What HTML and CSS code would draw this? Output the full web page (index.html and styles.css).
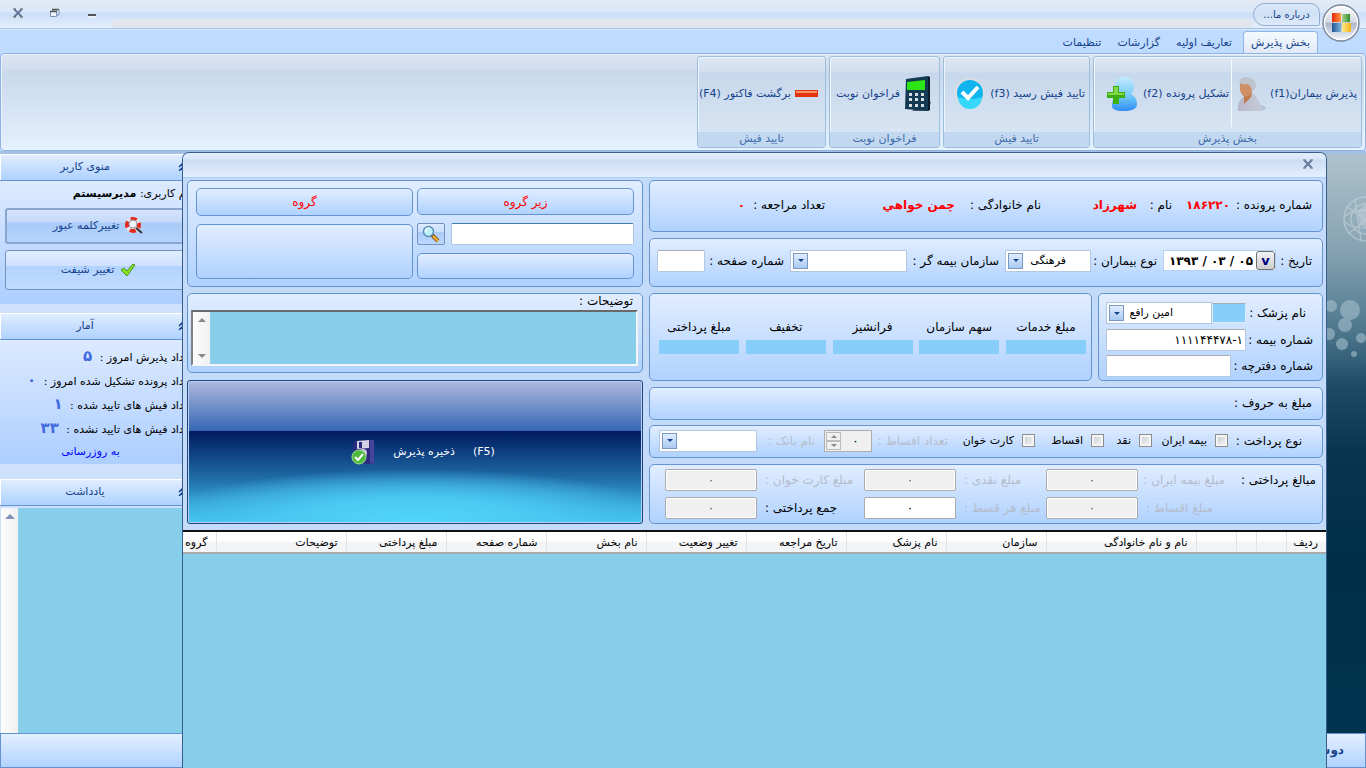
FILE: index.html
```html
<!DOCTYPE html>
<html lang="fa" dir="rtl">
<head>
  <meta charset="UTF-8">
  <meta name="viewport" content="width=device-width, initial-scale=1.0">
  <title>بخش پذیرش</title>
  <link rel="stylesheet" href="styles.css">
</head>
<body>

  <header class="titlebar">
    <button class="orb" aria-label="منو">
      <svg width="38" height="38" viewBox="0 0 38 38">
        <defs>
          <linearGradient id="orbFill" x1="0" y1="0" x2="0" y2="1">
            <stop offset="0" stop-color="#fdfdfe"/>
            <stop offset=".48" stop-color="#d3d8e2"/>
            <stop offset=".5" stop-color="#a9b5ca"/>
            <stop offset="1" stop-color="#f6fbff"/>
          </linearGradient>
          <linearGradient id="red"><stop offset="0" stop-color="#e8280c"/><stop offset="1" stop-color="#fb9a3c"/></linearGradient>
          <linearGradient id="green"><stop offset="0" stop-color="#a9d18a"/><stop offset="1" stop-color="#2f8d2c"/></linearGradient>
          <linearGradient id="blue"><stop offset="0" stop-color="#1d5696"/><stop offset="1" stop-color="#7fb2dc"/></linearGradient>
          <linearGradient id="gold"><stop offset="0" stop-color="#fde98d"/><stop offset="1" stop-color="#f5b417"/></linearGradient>
        </defs>
        <circle cx="19" cy="19" r="18" fill="url(#orbFill)" stroke="#7d8798" stroke-width="1.4"/>
        <circle cx="19" cy="19" r="16.5" fill="none" stroke="#fff" stroke-width="1.2"/>
        <path d="M10 9h9v9h-9z" fill="url(#red)"/>
        <path d="M20 10h8v8h-8z" fill="url(#green)"/>
        <path d="M10 19h9v9h-9z" fill="url(#blue)"/>
        <path d="M20 19h9v9h-9z" fill="url(#gold)"/>
      </svg>
    </button>
    <button class="about">درباره ما...</button>
    <span class="quick-strip"></span>
    <div class="window-buttons">
      <button aria-label="کوچک کردن"><svg width="10" height="10"><path d="M1 7h8" stroke="#555" stroke-width="2"/><path d="M1 9h8" stroke="#fff"/></svg></button>
      <button aria-label="بازگردانی"><svg width="10" height="10"><path d="M3 3V1.500h6V7H7" fill="none" stroke="#7d94b8"/><path d="M.5 3.500h6v5h-6z" fill="#eef5fd" stroke="#7d94b8"/><path d="M2 1.500h7M0 3.500h7" stroke="#555" stroke-width="1.500"/></svg></button>
      <button aria-label="بستن"><svg width="10" height="10"><path d="M1.500 1.500l7 7M8.500 1.500l-7 7" stroke="#66789a" stroke-width="2"/><path d="M0 1h3M7 1h3M0 9h3M7 9h3" stroke="#555"/></svg></button>
    </div>
  </header>

  <nav class="tabs">
    <a href="#" class="tab active">بخش پذیرش</a>
    <a href="#" class="tab">تعاریف اولیه</a>
    <a href="#" class="tab">گزارشات</a>
    <a href="#" class="tab">تنظیمات</a>
  </nav>

  <div class="ribbon">
    <section class="group group-reception">
      <div class="group-tools">
        <button class="tool">
          <span>پذیرش بیماران(f1)</span>
          <svg width="30" height="36" viewBox="0 0 30 36">
            <defs><linearGradient id="coat"><stop offset="0" stop-color="#b9b6c9"/><stop offset="1" stop-color="#c6cbd8"/></linearGradient></defs>
            <ellipse cx="22" cy="32" rx="8" ry="3" fill="#9aa6b8" opacity=".5"/>
            <path d="M2 35q-1-9 4-13l5-4 6-1q6 6 9 18z" fill="url(#coat)"/>
            <path d="M8 19l8-4-1 6-7 7z" fill="#c07a48"/>
            <path d="M4 7l10 0 3 5-2 6q-3 3-6 3-4-2-5-7z" fill="#cf9067"/>
            <path d="M3 7Q4 1 11 1q8 1 9 8 0 4-4 6-1-5-4-7-5 1-9-1z" fill="#bfc3cb"/>
          </svg>
        </button>
        <button class="tool divided">
          <span>تشکیل پرونده (f2)</span>
          <svg width="34" height="36" viewBox="0 0 34 36">
            <defs><linearGradient id="person" x1="0" y1="0" x2="0" y2="1"><stop offset="0" stop-color="#c3ebfd"/><stop offset=".6" stop-color="#6cc5f9"/><stop offset="1" stop-color="#2f8cf5"/></linearGradient></defs>
            <path d="M19 1q9 0 10 9 0 5-3 8 6 3 6 10 0 7-13 7T7 29q0-8 6-11-3-3-3-8 1-9 9-9z" fill="url(#person)"/>
            <path d="M8 10h6v6h6v6h-6v6H8v-6H2v-6h6z" fill="#3cae11"/>
            <path d="M9 11h4v6h6v2H3v-2h6z" fill="#86d64a"/>
          </svg>
        </button>
      </div>
      <h2>بخش پذیرش</h2>
    </section>
    <section class="group group-confirm">
      <div class="group-tools">
        <button class="tool">
          <span>تایید فیش رسید (f3)</span>
          <svg width="32" height="32" viewBox="0 0 32 32">
            <circle cx="16" cy="15" r="15" fill="#d9dee3"/>
            <circle cx="16" cy="15" r="13" fill="#10b4ee"/>
            <path d="M4 19a12 12 0 0 0 24 0q-12 4-24 0z" fill="#35d7fb"/>
            <path d="M8 14l6 6 10-11" fill="none" stroke="#fff" stroke-width="4"/>
          </svg>
        </button>
      </div>
      <h2>تایید فیش</h2>
    </section>
    <section class="group group-call">
      <div class="group-tools">
        <button class="tool spaced">
          <svg width="28" height="36" viewBox="0 0 28 36">
            <path d="M20 26h7l-3 9H8z" fill="#4b5966"/>
            <path d="M2 3L24 0v35L1 33z" fill="#123a52"/>
            <path d="M24 0l2 1v33l-2 1z" fill="#0a1d2b"/>
            <path d="M3 6l18-2v10H3z" fill="#2de414"/>
            <g fill="#d7dde3"><path d="M5 17h3v3H5zM11 17h3v3h-3zM17 17h3v3h-3zM5 22h3v3H5zM11 22h3v3h-3zM17 22h3v3h-3zM5 28h3v3H5zM11 28h3v3h-3zM17 28h3v3h-3z"/></g>
          </svg>
          <span>فراخوان نوبت</span>
        </button>
      </div>
      <h2>فراخوان نوبت</h2>
    </section>
    <section class="group group-return">
      <div class="group-tools">
        <button class="tool spaced">
          <svg width="23" height="7"><path d="M0 0h23v7H0z" fill="#e2330d"/><path d="M1 1h21v2H1z" fill="#fb9467"/></svg>
          <span>برگشت فاکتور (F4)</span>
        </button>
      </div>
      <h2>تایید فیش</h2>
    </section>
  </div>

  <div class="desktop">
    <div class="workspace">
      <div class="wallpaper">
        <svg width="40" height="240" viewBox="0 0 40 240">
          <g fill="none" stroke="#c5d3dc" stroke-width="1.500" opacity=".6">
            <circle cx="40" cy="65" r="22"/><circle cx="40" cy="65" r="15"/>
            <ellipse cx="40" cy="65" rx="22" ry="9"/><path d="M20 52l20 14M22 80l18-14M29 46l6 40"/>
          </g>
          <path d="M32 57l8-7v24l-6-3z" fill="#c5d3dc" opacity=".5"/>
          <g fill="#a5bfcd" opacity=".6">
            <circle cx="5" cy="152" r="6"/><circle cx="24" cy="156" r="10"/><circle cx="19" cy="171" r="7"/>
            <circle cx="3" cy="180" r="6"/><circle cx="16" cy="190" r="6"/><circle cx="35" cy="184" r="5"/><circle cx="28" cy="200" r="3"/>
          </g>
        </svg>
      </div>
      <aside class="sidebar">
        <h3><svg width="9" height="8"><path d="M1 4l3-3 3 3M1 8l3-3 3 3" fill="none" stroke="#15428b" stroke-width="1.500"/></svg><span>منوی کاربر</span></h3>
        <div class="side-panel user-panel">
          <p>نام کاربری: <b>مدیرسیستم</b></p>
          <button class="side-button pressed">
            <svg width="19" height="18" viewBox="0 0 19 18"><circle cx="8" cy="8" r="6" fill="#eef" stroke="#e2e2e6" stroke-width="4"/><circle cx="8" cy="8" r="6" fill="none" stroke="#e02a20" stroke-width="4" stroke-dasharray="6 3.420" stroke-dashoffset="3"/><circle cx="8" cy="7" r="4" fill="#edf4f8" stroke="#99a"/><path d="M11 11l6 5" stroke="#333" stroke-width="2"/></svg>
            <span>تغییرکلمه عبور</span>
          </button>
          <button class="side-button">
            <svg width="16" height="14" viewBox="0 0 16 14"><path d="M1 7l3-2 3 3 6-7 2 1-8 11z" fill="#85e01d" stroke="#4a941f"/></svg>
            <span>تغییر شیفت</span>
          </button>
        </div>
        <h3><svg width="9" height="8"><path d="M1 4l3-3 3 3M1 8l3-3 3 3" fill="none" stroke="#15428b" stroke-width="1.500"/></svg><span>آمار</span></h3>
        <div class="side-panel stats-panel">
          <p>تعداد پذیرش امروز : <b>۵</b></p>
          <p>تعداد پرونده تشکیل شده امروز : <b>۰</b></p>
          <p>تعداد فیش های تایید شده : <b>۱</b></p>
          <p>تعداد فیش های تایید نشده : <b>۳۳</b></p>
          <a href="#">به روزرسانی</a>
        </div>
        <h3><svg width="9" height="8"><path d="M1 4l3-3 3 3M1 8l3-3 3 3" fill="none" stroke="#15428b" stroke-width="1.500"/></svg><span>یادداشت</span></h3>
        <div class="notes">
          <textarea aria-label="یادداشت"></textarea>
          <div class="scroll"><svg width="10" height="5"><path d="M0 5l5-5 5 5z" fill="#8390b5"/></svg></div>
        </div>
      </aside>
    </div>
    <footer class="statusbar">دوشنبه</footer>

    <main class="dialog">
      <div class="dialog-title">
        <button aria-label="بستن"><svg width="10" height="10"><path d="M1.500 1.500l7 7M8.500 1.500l-7 7" stroke="#66789a" stroke-width="2"/><path d="M0 1h3M7 1h3M0 9h3M7 9h3" stroke="#667"/></svg></button>
      </div>

      <form class="form">
        <div class="column column-main">
          <div class="box patient-row">
            <span>شماره پرونده :</span><b>۱۸۶۲۲۰</b>
            <span>نام :</span><b>شهرزاد</b>
            <span>نام خانوادگی :</span><b>چمن خواهي</b>
            <span>تعداد مراجعه :</span><b>۰</b>
          </div>

          <div class="box visit-row">
            <label for="date">تاریخ :</label>
            <div class="date-field">
              <button type="button" aria-label="تقویم">v</button>
              <input id="date" type="text" dir="ltr" value="۱۳۹۳ / ۰۳ / ۰۵">
            </div>
            <label for="kind">نوع بیماران :</label>
            <div class="combo">
              <select id="kind"><option>فرهنگی</option></select>
              <span class="arrow"></span>
            </div>
            <label for="insurer">سازمان بیمه گر :</label>
            <div class="combo">
              <select id="insurer"><option></option></select>
              <span class="arrow"></span>
            </div>
            <label for="page">شماره صفحه :</label>
            <input id="page" type="text" class="field">
          </div>

          <div class="pair">
            <div class="box doctor">
              <div class="line">
                <label for="doctor" class="inset">نام پزشک :</label>
                <input type="text" class="code" aria-label="کد پزشک">
                <div class="combo">
                  <select id="doctor"><option>امین رافع</option></select>
                  <span class="arrow"></span>
                </div>
              </div>
              <div class="line">
                <label for="insurance">شماره بیمه :</label>
                <input id="insurance" type="text" class="field number" dir="ltr" value="۱۱۱۱۴۴۴۷۸-۱">
              </div>
              <div class="line">
                <label for="booklet" class="long">شماره دفترچه :</label>
                <input id="booklet" type="text" class="field">
              </div>
            </div>
            <div class="box sums">
              <div><span>مبلغ خدمات</span><output></output></div>
              <div><span>سهم سازمان</span><output></output></div>
              <div><span>فرانشیز</span><output></output></div>
              <div><span>تخفیف</span><output></output></div>
              <div><span>مبلغ پرداختی</span><output></output></div>
            </div>
          </div>

          <div class="box words-row">مبلغ به حروف :</div>

          <div class="box method-row">
            <span>نوع پرداخت :</span>
            <label class="check"><input type="checkbox"> بیمه ایران</label>
            <label class="check"><input type="checkbox"> نقد</label>
            <label class="check"><input type="checkbox"> اقساط</label>
            <label class="check"><input type="checkbox"> کارت خوان</label>
            <label for="count" class="off">تعداد اقساط :</label>
            <div class="spinner">
              <input id="count" type="text" value="۰" disabled>
              <span class="steps"><i class="up"></i><i class="down"></i></span>
            </div>
            <label for="bank" class="off bank">نام بانک :</label>
            <div class="combo">
              <select id="bank"><option></option></select>
              <span class="arrow"></span>
            </div>
          </div>

          <div class="box amounts">
            <span>مبالغ پرداختی :</span>
            <label for="a1" class="off">مبلغ بیمه ایران :</label>
            <input id="a1" type="text" class="field" value="۰" disabled>
            <label for="a2" class="off">مبلغ نقدی :</label>
            <input id="a2" type="text" class="field" value="۰" disabled>
            <label for="a3" class="off">مبلغ کارت خوان :</label>
            <input id="a3" type="text" class="field" value="۰" disabled>
            <span></span>
            <label for="a4" class="off">مبلغ اقساط :</label>
            <input id="a4" type="text" class="field" value="۰" disabled>
            <label for="a5" class="off">مبلغ هر قسط :</label>
            <input id="a5" type="text" class="field" value="۰">
            <label for="a6">جمع پرداختی :</label>
            <input id="a6" type="text" class="field" value="۰" disabled>
          </div>
        </div>

        <div class="column column-side">
          <div class="box groups">
            <div class="groups-side">
              <div class="box caption">زیر گروه</div>
              <div class="search">
                <input type="text" class="field" aria-label="جستجوی زیر گروه">
                <button type="button" aria-label="جستجو">
                  <svg width="18" height="18" viewBox="0 0 18 18"><path d="M10 10l6 6" stroke="#8a5a14" stroke-width="4"/><path d="M11 11l5 5" stroke="#f6b73c" stroke-width="2"/><circle cx="6.500" cy="6.500" r="5" fill="#b9f0fb" stroke="#5d8fb5" stroke-width="1.500"/><path d="M3.500 7a3 3 0 0 1 4-3.500" stroke="#fff" stroke-width="1.500" fill="none"/></svg>
                </button>
              </div>
              <div class="box blank"></div>
            </div>
            <div class="groups-side">
              <div class="box caption">گروه</div>
              <div class="box blank tall"></div>
            </div>
          </div>

          <div class="box comments">
            <label for="comments">توضیحات :</label>
            <div class="comment-area">
              <textarea id="comments"></textarea>
              <div class="scroll">
                <svg width="8" height="4"><path d="M0 4l4-4 4 4z" fill="#888"/></svg>
                <svg width="8" height="4"><path d="M0 0h8L4 4z" fill="#888"/></svg>
              </div>
            </div>
          </div>

          <button type="button" class="save">
            <span>(F5)</span>
            <span>ذخیره پذیرش</span>
            <svg width="24" height="26" viewBox="0 0 24 26">
              <path d="M3 2L23 1v24L2 24z" fill="#2c2b80"/>
              <path d="M19 1h4v24l-4-1z" fill="#47449c"/>
              <path d="M6 2l12-1v8L6 10z" fill="#d4d3e4"/><path d="M8 3h3v6H8z" fill="#2c2b80"/>
              <circle cx="12" cy="14" r="4" fill="#c9c8dd"/>
              <circle cx="8" cy="18" r="7" fill="#4cba3c" stroke="#a6dd9c"/>
              <path d="M4 18l3 3 5-6" fill="none" stroke="#fff" stroke-width="2"/>
            </svg>
          </button>
        </div>
      </form>

      <div class="grid">
        <table>
          <colgroup>
            <col class="w40"><col class="w30"><col class="w20"><col class="w40"><col class="w150">
            <col class="w100"><col class="w100"><col class="w100"><col class="w100"><col class="w100"><col class="w100"><col class="w100">
            <col class="w130"><col>
          </colgroup>
          <thead>
            <tr>
              <th>ردیف</th><th></th><th></th><th></th><th>نام و نام خانوادگی</th>
              <th>سازمان</th><th>نام پزشک</th><th>تاریخ مراجعه</th><th>تغییر وضعیت</th>
              <th>نام بخش</th><th>شماره صفحه</th><th>مبلغ پرداختی</th>
              <th>توضیحات</th><th>گروه</th>
            </tr>
          </thead>
        </table>
      </div>
    </main>
  </div>

</body>
</html>
```
FILE: styles.css
```css
* {
  box-sizing: border-box;
}

body {
  margin: 0;
  height: 100vh;
  display: flex;
  flex-direction: column;
  overflow: hidden;
  background: #bfdbff;
  font-family: "DejaVu Sans", Tahoma, sans-serif;
  font-size: 11px;
  line-height: 14px;
  color: #000;
}

button, input, select, textarea {
  font: inherit;
  color: inherit;
  margin: 0;
  padding: 0;
}

button {
  cursor: pointer;
}

svg {
  display: block;
  flex: none;
}

h2, h3, p {
  margin: 0;
  font-size: 11px;
  font-weight: normal;
}

/* title bar */

.titlebar {
  position: relative;
  display: flex;
  height: 28px;
  flex: none;
  padding-right: 46px;
  background: linear-gradient(#e3eaf5, #d9e8fa 12px, #cadef7 13px, #e4effd);
}

.orb {
  position: absolute;
  top: 4px;
  right: 6px;
  z-index: 2;
  border: none;
  background: none;
}

.about {
  height: 23px;
  width: 67px;
  margin-top: 3px;
  border: 1px solid #93acd1;
  border-radius: 12px 10px 2px 12px;
  background: linear-gradient(#dbe8f8, #cfe0f5 10px, #dfeafa);
  color: #15428b;
  font-size: 10px;
}

.quick-strip {
  flex: 1;
  align-self: flex-end;
  height: 9px;
  border-radius: 6px 0 0 0;
  background: #e1e6ee;
}

.window-buttons {
  display: flex;
  align-items: flex-start;
  gap: 27px;
  padding: 8px 14px 0 13px;
}

.window-buttons button,
.dialog-title button {
  border: none;
  background: none;
}

/* ribbon */

.tabs {
  display: flex;
  flex: none;
  height: 25px;
  padding: 2px 48px 0 0;
  border-top: 1px solid #a5c4ea;
  box-shadow: inset 0 1px #d9e8fb;
}

.tab {
  padding: 5px 8px 0;
  color: #15428b;
  text-decoration: none;
}

.tab.active {
  margin-left: 3px;
  border: 1px solid #8fb5e8;
  border-bottom: none;
  border-radius: 4px 4px 0 0;
  background: linear-gradient(#f5f9fe, #e0eaf6);
  padding: 4px 7px 0;
}

.ribbon {
  display: flex;
  flex: none;
  gap: 3px;
  height: 98px;
  padding: 2px 3px;
  border: 1px solid #8db2e3;
  border-radius: 4px;
  box-shadow: inset 0 0 0 1px #e8f3fd;
  background: linear-gradient(#dbe5f2, #d1ddee 16px, #c8d8eb 17px, #e4f1ff);
}

.group {
  display: flex;
  flex-direction: column;
  height: 92px;
  border: 1px solid #9ebfdb;
  border-radius: 3px;
  box-shadow: inset 1px 1px #edf4fb;
  background: linear-gradient(#dde7f4, #d2dff0 15px, #c7d8ec 16px, #dbe7f4);
}

.group-reception { width: 269px; }
.group-confirm { width: 147px; }
.group-call { width: 111px; }
.group-return { width: 129px; }

.group-tools {
  flex: 1;
  display: flex;
  padding: 3px 4px 5px;
}

.tool {
  display: flex;
  align-items: center;
  gap: 4px;
  border: none;
  background: none;
  color: #15428b;
  white-space: nowrap;
}

.tool.divided {
  margin-right: 4px;
  padding-right: 2px;
  border-right: 1px solid #f4f9ff;
}

.tool.spaced {
  padding-right: 3px;
}

.group h2 {
  height: 15px;
  text-align: center;
  color: #3e6aaa;
  background: #c1d8f0;
}

/* main area */

.desktop {
  position: relative;
  flex: 1;
  display: flex;
  flex-direction: column;
  min-height: 0;
  padding-top: 3px;
  background: #a3bfe3;
}

.workspace {
  flex: 1;
  display: flex;
  min-height: 0;
}

.wallpaper {
  flex: 1;
  background: linear-gradient(#aec2cd, #84a1b1 100px, #4b758b 180px, #1e4c66 230px, #08354d 300px, #002f48 400px, #00344e);
}

.sidebar {
  width: 197px;
  display: flex;
  flex-direction: column;
  background: #cde1fd;
}

.sidebar h3 {
  display: flex;
  align-items: center;
  gap: 8px;
  flex: none;
  height: 27px;
  padding-right: 10px;
  border-bottom: 1px solid #6593cf;
  box-shadow: inset 1px 1px #fff;
  background: linear-gradient(#e3efff, #c5deff 55%, #afd2ff);
  color: #15428b;
}

.sidebar h3 span {
  flex: 1;
  text-align: center;
}

.side-panel {
  display: flex;
  flex-direction: column;
  padding: 6px 5px 0;
  background: linear-gradient(#dceaff, #adceff);
}

.user-panel {
  gap: 6px;
  height: 123px;
  margin-bottom: 9px;
}

.side-button {
  display: flex;
  align-items: center;
  justify-content: center;
  gap: 6px;
  height: 40px;
  border: 1px solid #7492bd;
  border-radius: 3px;
  background: linear-gradient(#e1eeff, #cfe2fd 38%, #b2d3ff 40%, #c2dcff);
  color: #15428b;
}

.side-button.pressed {
  height: 36px;
  margin-top: 1px;
  border: 2px solid #8aa5cf;
  background: linear-gradient(#d5e5fb, #c5dafa 38%, #aacbf8 40%, #b5d3fd);
}

.stats-panel {
  height: 124px;
  margin-bottom: 15px;
  padding: 4px 4px 0;
}

.stats-panel p {
  height: 24px;
  line-height: 24px;
  white-space: nowrap;
}

.stats-panel b {
  margin-right: 4px;
  font-size: 15px;
  color: #4169e1;
}

.stats-panel a {
  padding: 5px 16px 0 0;
  text-align: center;
  color: #0000ff;
  text-decoration: none;
}

.notes {
  flex: 1;
  display: flex;
  padding: 2px 0 0 1px;
}

.notes textarea {
  flex: 1;
  border: none;
  resize: none;
  background: #87ceeb;
}

.scroll {
  width: 17px;
  display: flex;
  flex-direction: column;
  align-items: center;
  justify-content: space-between;
  padding: 6px 0;
  background: linear-gradient(90deg, #fdfdfd, #f0f0f0);
}

.statusbar {
  height: 35px;
  flex: none;
  padding: 9px 21px 0;
  border: 1px solid #6593cf;
  background: linear-gradient(#e3efff, #b1d3ff);
  font-size: 12px;
  font-weight: bold;
  color: #15428b;
}

/* dialog */

.dialog {
  position: absolute;
  top: 1px;
  right: 39px;
  bottom: 0;
  left: 182px;
  display: flex;
  flex-direction: column;
  border: 1px solid #385d8f;
  border-bottom: none;
  border-radius: 7px 7px 0 0;
  background: #c3daf9;
  font-size: 12px;
  overflow: hidden;
}

.dialog-title {
  flex: none;
  height: 25px;
  padding: 5px 13px;
  border-bottom: 1px solid #a8cff8;
  background: linear-gradient(#e1edfb, #d9e8fa 6px, #cbddf6 7px, #e3effd);
}

.form {
  display: flex;
  gap: 6px;
  padding: 2px 3px 6px 4px;
}

.column {
  display: flex;
  flex-direction: column;
  gap: 6px;
}

.column-main {
  flex: 1;
  min-width: 0;
}

.column-side {
  flex: none;
  width: 456px;
}

.box {
  border: 1px solid #6593cf;
  border-radius: 5px;
  background: linear-gradient(#e1edff, #b0d2ff);
  white-space: nowrap;
}

.patient-row {
  display: grid;
  grid-template-columns: 82px 58px 35px 96px 86px 130px 80px 1fr;
  align-items: center;
  height: 52px;
  padding: 0 10px 2px;
}

.patient-row b {
  color: #ff0000;
}

.visit-row {
  display: grid;
  grid-template-columns: 30px 113px 60px 86px 86px 117px 73px 48px;
  gap: 6px;
  align-items: center;
  height: 49px;
  padding: 0 10px 4px 7px;
}

.field {
  width: 100%;
  min-width: 0;
  height: 22px;
  padding: 0 4px;
  border: 1px solid #b3c7e1;
  border-top-color: #abadb3;
  border-radius: 2px;
  background: #fff;
}

.date-field {
  display: flex;
  height: 21px;
  border: 1px solid #b3d0f5;
  background: #fff;
}

.date-field button {
  width: 19px;
  border: 1px solid #707070;
  border-radius: 3px;
  background: linear-gradient(#f2f2f2, #cfcfcf);
  color: #000080;
  font-size: 13px;
  font-weight: bold;
  line-height: 14px;
}

.date-field input {
  flex: 1;
  min-width: 0;
  padding-right: 3px;
  border: none;
  background: none;
  font-weight: bold;
  text-align: right;
}

.combo {
  display: flex;
  flex: 1;
  height: 22px;
  padding: 2px;
  border: 1px solid #b3c7e1;
  background: #fff;
}

.combo select {
  flex: 1;
  min-width: 0;
  padding: 0 22px 0 2px;
  border: none;
  background: none;
  font-size: 11px;
  appearance: none;
}

.arrow {
  width: 15px;
  border: 1px solid #7a98c4;
  background: linear-gradient(#e1edff, #a9c9f2);
  display: flex;
  align-items: center;
  justify-content: center;
}

.arrow::after {
  content: "";
  border: 3px solid transparent;
  border-top-color: #15428b;
  border-bottom: none;
}

.pair {
  display: flex;
  gap: 6px;
}

.doctor {
  width: 225px;
  height: 88px;
  display: flex;
  flex-direction: column;
  justify-content: space-between;
  padding: 8px 9px 3px 7px;
}

.line {
  display: flex;
  align-items: center;
}

.line label {
  flex: none;
  width: 67px;
}

.line .inset {
  padding-right: 7px;
}

.line .long {
  width: 82px;
}

.line .combo select {
  padding-right: 36px;
}

.code {
  width: 34px;
  height: 20px;
  border: 1px solid #dfe9f5;
  border-top-color: #abadb3;
  background: #87cefa;
}

.number {
  padding: 0 2px;
  text-align: right;
}

.sums {
  flex: 1;
  display: grid;
  grid-template-columns: repeat(5, 80px);
  justify-content: space-between;
  padding: 26px 5px 0 9px;
  text-align: center;
}

.sums output {
  display: block;
  height: 14px;
  margin-top: 6px;
  background: #87cefa;
}

.words-row {
  height: 33px;
  padding: 8px 10px;
}

.method-row {
  display: grid;
  grid-template-columns: 74px 76px 48px 69px 87px 76px 48px 67px 98px;
  align-items: center;
  height: 33px;
  margin-top: -1px;
  padding: 0 20px 2px 9px;
}

.method-row .check {
  display: flex;
  align-items: center;
  gap: 8px;
  font-size: 11px;
}

.method-row .bank {
  padding-right: 9px;
}

.off {
  color: #b4bccb;
}

input[type="checkbox"] {
  appearance: none;
  flex: none;
  width: 13px;
  height: 13px;
  border: 1px solid #8e8f8f;
  background: linear-gradient(135deg, #c6cbd3, #f6f6f6);
  box-shadow: inset 0 0 0 2px #f4f4f4;
}

.spinner {
  display: flex;
  height: 22px;
  padding: 1px;
  border: 1px solid #abadb3;
  background: #f0f0f0;
}

.spinner input {
  flex: 1;
  min-width: 0;
  border: none;
  background: none;
  text-align: center;
}

.steps {
  width: 15px;
  display: flex;
  flex-direction: column;
}

.steps i {
  flex: 1;
  display: flex;
  align-items: center;
  justify-content: center;
  border: 1px solid #bcbcbc;
}

.steps i::after {
  content: "";
  border: 3px solid transparent;
}

.steps .up::after {
  border-bottom-color: #888;
  border-top: none;
}

.steps .down::after {
  border-top-color: #888;
  border-bottom: none;
}

.amounts {
  display: grid;
  grid-template-columns: 91px 87px 92px 90px 92px 107px 92px;
  row-gap: 6px;
  align-items: center;
  height: 60px;
  padding: 4px 6px;
}

.amounts label {
  padding-left: 8px;
  text-align: left;
}

.amounts .field {
  border-color: #ababab;
  text-align: center;
}

.amounts .field:disabled {
  border: 1px solid #ababab;
  box-shadow: inset 0 0 0 1px #fff;
  background: #f0f0f0;
  color: #555;
}

.groups {
  display: flex;
  gap: 4px;
  height: 107px;
  padding: 7px 8px;
}

.groups-side {
  flex: 1;
  display: flex;
  flex-direction: column;
}

.caption {
  height: 28px;
  padding-top: 6px;
  text-align: center;
  color: #ff0000;
}

.search {
  display: flex;
  gap: 6px;
  margin: 8px 0;
}

.search .field {
  flex: 1;
  border-top-color: #3d7bad;
}

.search button {
  width: 28px;
  height: 22px;
  display: flex;
  align-items: center;
  justify-content: center;
  border: 1px solid #7492bd;
  border-radius: 2px;
  background: linear-gradient(#dceaff, #c9dffd 38%, #a9cbf8 40%, #bcd8ff);
}

.blank {
  height: 28px;
}

.tall {
  height: 56px;
  margin-top: 8px;
}

.comments {
  display: flex;
  flex-direction: column;
  height: 80px;
  padding: 0 4px 6px 3px;
}

.comments label {
  padding: 0 5px 2px;
}

.comment-area {
  flex: 1;
  display: flex;
  border: 2px solid #f4f4f4;
  border-top-color: #696969;
  border-left-color: #808080;
}

.comment-area textarea {
  flex: 1;
  border: none;
  resize: none;
  background: #87ceeb;
}

.save {
  flex: 1;
  display: flex;
  align-items: center;
  justify-content: center;
  gap: 18px;
  margin-top: 1px;
  padding-left: 16px;
  border: 1px solid #1d4584;
  border-radius: 3px;
  box-shadow: inset 0 0 0 1px #bccfec;
  background:
    radial-gradient(ellipse 60% 38% at 50% 100%, #51d6fd, #4bc9f3 45%, rgba(70, 190, 235, 0.6) 75%, transparent),
    linear-gradient(#adb9dd, #3767b4 35%, #001a60 35%, #1f6ba6 68%, #47cdf9);
  color: #fff;
  font-size: 11px;
}

.grid {
  flex: 1;
  border-top: 2px solid #111;
  background: #87ceeb;
}

.grid table {
  width: 100%;
  table-layout: fixed;
  border-collapse: collapse;
}

.grid th {
  height: 21px;
  padding: 2px 8px 0 0;
  border-left: 1px solid #e2e3e6;
  border-bottom: 2px solid #a9a9a9;
  background: linear-gradient(#fff 45%, #f3f4f6 50%);
  font-size: 11px;
  font-weight: normal;
  text-align: right;
  white-space: nowrap;
}

.grid th:last-child {
  border-left: none;
}

.w20 { width: 20px; }
.w30 { width: 30px; }
.w40 { width: 40px; }
.w100 { width: 100px; }
.w130 { width: 130px; }
.w150 { width: 150px; }
```
